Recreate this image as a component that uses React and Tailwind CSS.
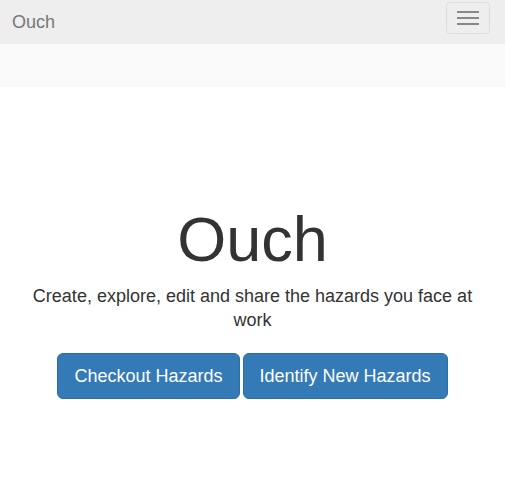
export default function App() {
  return (
    <div className="min-h-screen bg-white font-['Liberation_Sans',Arial,sans-serif] text-[#333]">
      {/* Navbar */}
      <nav className="h-[44px] bg-[#eeeeee] flex items-center justify-between pl-[12px] pr-[15px]">
        <span className="text-[18px] text-[#777] leading-[20px]">Ouch</span>
        <button className="w-[44px] h-[32px] -mt-[8px] border border-[#dddddd] rounded-[4px] flex flex-col items-center justify-center gap-[4px]">
          <span className="block w-[22px] h-[2px] bg-[#888]"></span>
          <span className="block w-[22px] h-[2px] bg-[#888]"></span>
          <span className="block w-[22px] h-[2px] bg-[#888]"></span>
        </button>
      </nav>
      <div className="h-[43px] bg-[#f9f9f9]"></div>

      {/* Hero */}
      <section className="text-center px-[15px] pt-[118px]">
        <h1 className="text-[63px] leading-[1.1] text-[#333]">Ouch</h1>
        <p className="text-[18px] leading-[24px] mt-[10px]">
          Create, explore, edit and share the hazards you face at work
        </p>
        <div className="mt-[21px] flex justify-center gap-[3px]">
          <a href="#" className="px-[16px] py-[10px] text-[18px] leading-[24px] text-white bg-[#337ab7] border border-[#2e6da4] rounded-[6px]">
            Checkout Hazards
          </a>
          <a href="#" className="px-[16px] py-[10px] text-[18px] leading-[24px] text-white bg-[#337ab7] border border-[#2e6da4] rounded-[6px]">
            Identify New Hazards
          </a>
        </div>
      </section>
    </div>
  );
}
